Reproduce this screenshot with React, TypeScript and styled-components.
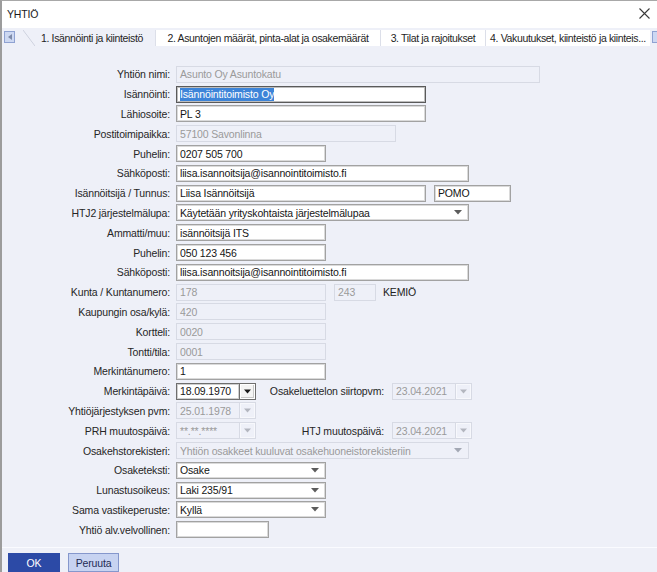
import React from 'react';
import styled, { createGlobalStyle, css } from 'styled-components';

const PanelBg = '#eef0f8';

type Variant = 'normal' | 'focus' | 'disabled';

function Caret({ disabled }: { disabled?: boolean }) {
	return (
		<svg width='8' height='5' viewBox='0 0 8 5'>
			<path d='M0 0h8L4 4.5z' fill={disabled ? '#a3a8b4' : '#5c5c5c'} />
		</svg>
	);
}

function TextField({ w, variant = 'normal', children }: { w: number; variant?: Variant; children?: React.ReactNode }) {
	return (
		<Field $w={w} $variant={variant}>
			{children}
		</Field>
	);
}

function SelectField({ w, disabled, children }: { w: number; disabled?: boolean; children?: React.ReactNode }) {
	return (
		<Field $w={w} $variant={disabled ? 'disabled' : 'normal'}>
			<SelectText>{children}</SelectText>
			<CaretBox>
				<Caret disabled={disabled} />
			</CaretBox>
		</Field>
	);
}

function DateField({ value, disabled }: { value: string; disabled?: boolean }) {
	return (
		<DateBox>
			<DateInput $disabled={disabled}>{value}</DateInput>
			<DateButton $disabled={disabled}>
				<svg width='7' height='5' viewBox='0 0 7 5'>
					<path d='M0 0.5h7L3.5 4.5z' fill={disabled ? '#b3b6bf' : '#1a1a1a'} />
				</svg>
			</DateButton>
		</DateBox>
	);
}

export default function App() {
	return (
		<>
			<GlobalStyle />
			<Window>
				<TitleBar>
					<span>YHTIÖ</span>
					<svg width='11' height='11' viewBox='0 0 11 11'>
						<path d='M0.5 0.5l10 10M10.5 0.5l-10 10' stroke='#3a3a3a' strokeWidth='1.1' />
					</svg>
				</TitleBar>

				<TabStrip>
					<ScrollButton>
						<svg width='4' height='6' viewBox='0 0 4 6'>
							<path d='M4 0v6L0 3z' fill='#7d8aa8' />
						</svg>
					</ScrollButton>
					<ActiveTab>1. Isännöinti ja kiinteistö</ActiveTab>
					<Tab $w={225}>2. Asuntojen määrät, pinta-alat ja osakemäärät</Tab>
					<Tab $w={105}>3. Tilat ja rajoitukset</Tab>
					<Tab $w={165}>4. Vakuutukset, kiinteistö ja kiinteis...</Tab>
					<ScrollButton $right />
				</TabStrip>

				<Content>
					<Row>
						<Label>Yhtiön nimi:</Label>
						<TextField w={364} variant='disabled'>
							Asunto Oy Asuntokatu
						</TextField>
					</Row>
					<Row>
						<Label>Isännöinti:</Label>
						<TextField w={250} variant='focus'>
							<Selected>Isännöintitoimisto Oy</Selected>
						</TextField>
					</Row>
					<Row>
						<Label>Lähiosoite:</Label>
						<TextField w={250}>PL 3</TextField>
					</Row>
					<Row>
						<Label>Postitoimipaikka:</Label>
						<TextField w={220} variant='disabled'>
							57100 Savonlinna
						</TextField>
					</Row>
					<Row>
						<Label>Puhelin:</Label>
						<TextField w={150}>0207 505 700</TextField>
					</Row>
					<Row>
						<Label>Sähköposti:</Label>
						<TextField w={293}>liisa.isannoitsija@isannointitoimisto.fi</TextField>
					</Row>
					<Row>
						<Label>Isännöitsijä / Tunnus:</Label>
						<TextField w={250}>Liisa Isännöitsijä</TextField>
						<Spacer $w={8} />
						<TextField w={77}>POMO</TextField>
					</Row>
					<Row>
						<Label>HTJ2 järjestelmälupa:</Label>
						<SelectField w={293}>Käytetään yrityskohtaista järjestelmälupaa</SelectField>
					</Row>
					<Row>
						<Label>Ammatti/muu:</Label>
						<TextField w={150}>isännöitsijä ITS</TextField>
					</Row>
					<Row>
						<Label>Puhelin:</Label>
						<TextField w={150}>050 123 456</TextField>
					</Row>
					<Row>
						<Label>Sähköposti:</Label>
						<TextField w={293}>liisa.isannoitsija@isannointitoimisto.fi</TextField>
					</Row>
					<Row>
						<Label>Kunta / Kuntanumero:</Label>
						<TextField w={150} variant='disabled'>
							178
						</TextField>
						<Spacer $w={8} />
						<TextField w={42} variant='disabled'>
							243
						</TextField>
						<Spacer $w={7} />
						<PlainText>KEMIÖ</PlainText>
					</Row>
					<Row>
						<Label>Kaupungin osa/kylä:</Label>
						<TextField w={150} variant='disabled'>
							420
						</TextField>
					</Row>
					<Row>
						<Label>Kortteli:</Label>
						<TextField w={150} variant='disabled'>
							0020
						</TextField>
					</Row>
					<Row>
						<Label>Tontti/tila:</Label>
						<TextField w={150} variant='disabled'>
							0001
						</TextField>
					</Row>
					<Row>
						<Label>Merkintänumero:</Label>
						<TextField w={150}>1</TextField>
					</Row>
					<Row>
						<Label>Merkintäpäivä:</Label>
						<DateField value='18.09.1970' />
						<SubLabel>Osakeluettelon siirtopvm:</SubLabel>
						<DateField value='23.04.2021' disabled />
					</Row>
					<Row>
						<Label>Yhtiöjärjestyksen pvm:</Label>
						<DateField value='25.01.1978' disabled />
					</Row>
					<Row>
						<Label>PRH muutospäivä:</Label>
						<DateField value='**.**.****' disabled />
						<SubLabel>HTJ muutospäivä:</SubLabel>
						<DateField value='23.04.2021' disabled />
					</Row>
					<Row>
						<Label>Osakehstorekisteri:</Label>
						<SelectField w={293} disabled>
							Yhtiön osakkeet kuuluvat osakehuoneistorekisteriin
						</SelectField>
					</Row>
					<Row>
						<Label>Osaketeksti:</Label>
						<SelectField w={150}>Osake</SelectField>
					</Row>
					<Row>
						<Label>Lunastusoikeus:</Label>
						<SelectField w={150}>Laki 235/91</SelectField>
					</Row>
					<Row>
						<Label>Sama vastikeperuste:</Label>
						<SelectField w={150}>Kyllä</SelectField>
					</Row>
					<Row>
						<Label>Yhtiö alv.velvollinen:</Label>
						<TextField w={93} />
					</Row>
				</Content>

				<Footer>
					<Button $primary>OK</Button>
					<Button>Peruuta</Button>
				</Footer>
			</Window>
		</>
	);
}

const GlobalStyle = createGlobalStyle`
	html, body {
		margin: 0;
		padding: 0;
		background: #ffffff;
	}
	body {
		font-family: 'Liberation Sans', Arial, sans-serif;
		font-size: 10.5px;
		letter-spacing: -0.15px;
		color: #222222;
	}
`;

const Window = styled.div`
	width: 657px;
	height: 572px;
	box-sizing: border-box;
	border-top: 1px solid #a8a8a8;
	border-left: 2px solid #9c9c9c;
	background: ${PanelBg};
	display: flex;
	flex-direction: column;
	overflow: hidden;
`;

const TitleBar = styled.div`
	height: 27px;
	flex: none;
	box-sizing: border-box;
	padding: 0 7px 2px 5px;
	background: #ffffff;
	display: flex;
	align-items: center;
	justify-content: space-between;
	color: #1a1a1a;
`;

const TabStrip = styled.div`
	height: 19px;
	flex: none;
	box-sizing: border-box;
	padding: 2px 0 1px 2px;
	display: flex;
	align-items: stretch;
	background: ${PanelBg};
	letter-spacing: -0.35px;
`;

const ScrollButton = styled.div<{ $right?: boolean }>`
	width: 11px;
	height: 12px;
	flex: none;
	box-sizing: border-box;
	margin: 1px 0 0 ${(p) => (p.$right ? '2px' : '0')};
	border: 1px solid #8fa2d2;
	background: #cdd8f2;
	display: flex;
	align-items: center;
	justify-content: center;
`;

const ActiveTab = styled.div`
	position: relative;
	width: 132px;
	margin-left: 8px;
	flex: none;
	display: flex;
	align-items: center;
	padding-left: 18px;
	box-sizing: border-box;
	color: #1e1e1e;

	&::before {
		content: '';
		position: absolute;
		left: 0;
		top: 0;
		width: 12px;
		height: 100%;
		background: linear-gradient(to top right, transparent 46%, #cdd1de 50%, transparent 54%);
	}
`;

const Tab = styled.div<{ $w: number }>`
	width: ${(p) => p.$w}px;
	flex: none;
	box-sizing: border-box;
	background: #ffffff;
	border-left: 1px solid #dcdfe9;
	display: flex;
	align-items: center;
	justify-content: center;
	white-space: nowrap;
	overflow: hidden;
	color: #1e1e1e;
`;

const Content = styled.div`
	flex: 1;
	box-sizing: border-box;
	padding-top: 17.5px;
	display: flex;
	flex-direction: column;
`;

const Row = styled.div`
	height: 19.8px;
	display: flex;
	align-items: center;
`;

const Label = styled.div`
	width: 168px;
	flex: none;
	margin-right: 6px;
	text-align: right;
	white-space: nowrap;
	color: #262626;
`;

const SubLabel = styled.div`
	width: 128px;
	flex: none;
	margin-right: 8px;
	text-align: right;
	white-space: nowrap;
	color: #262626;
`;

const PlainText = styled.span`
	color: #222222;
`;

const Spacer = styled.div<{ $w: number }>`
	width: ${(p) => p.$w}px;
	flex: none;
`;

const variantStyles = {
	normal: css`
		background: #ffffff;
		border: 1px solid #a2a2a2;
		box-shadow: inset 0 0 0 1px #dadada;
		color: #151515;
	`,
	focus: css`
		background: #ffffff;
		border: 1px solid #5a5a5a;
		box-shadow: inset 0 0 0 1px #bdbdbd;
		color: #151515;
	`,
	disabled: css`
		background: ${PanelBg};
		border: 1px solid #d7dae4;
		color: #9a9a9a;
	`,
};

const Field = styled.div<{ $w: number; $variant: Variant }>`
	width: ${(p) => p.$w}px;
	height: 17px;
	flex: none;
	box-sizing: border-box;
	padding: 0 3px 0 3px;
	display: flex;
	align-items: center;
	white-space: nowrap;
	overflow: hidden;
	${(p) => variantStyles[p.$variant]}
`;

const Selected = styled.span`
	background: #3d84d8;
	color: #ffffff;
	line-height: 13px;
`;

const SelectText = styled.span`
	flex: 1;
	overflow: hidden;
`;

const CaretBox = styled.span`
	width: 12px;
	flex: none;
	display: flex;
	justify-content: center;
	margin-right: 1px;
`;

const DateBox = styled.div`
	width: 80px;
	height: 17px;
	flex: none;
	display: flex;
`;

const DateInput = styled.div<{ $disabled?: boolean }>`
	flex: 1;
	box-sizing: border-box;
	padding-left: 3px;
	display: flex;
	align-items: center;
	${(p) =>
		p.$disabled
			? css`
					background: ${PanelBg};
					border: 1px solid #d7dae4;
					border-right: none;
					color: #9a9a9a;
			  `
			: css`
					background: #ffffff;
					border: 1px solid #6e6e6e;
					border-right: none;
					box-shadow: inset 0 0 0 1px #cfcfcf;
					color: #151515;
			  `}
`;

const DateButton = styled.div<{ $disabled?: boolean }>`
	width: 17px;
	flex: none;
	box-sizing: border-box;
	display: flex;
	align-items: center;
	justify-content: center;
	${(p) =>
		p.$disabled
			? css`
					background: ${PanelBg};
					border: 1px solid #d7dae4;
					box-shadow: inset 0 0 0 1px #f7f8fc;
			  `
			: css`
					background: #f4f4f4;
					border: 1px solid #6e6e6e;
					box-shadow: inset 0 0 0 1px #ffffff, inset -1px -1px 0 1px #c8c8c8;
			  `}
`;

const Footer = styled.div`
	height: 25px;
	flex: none;
	box-sizing: border-box;
	border-top: 1px solid #fafbff;
	padding: 5px 0 0 6px;
	display: flex;
	gap: 8px;
	align-items: flex-start;
`;

const Button = styled.div<{ $primary?: boolean }>`
	width: ${(p) => (p.$primary ? '52px' : '51px')};
	height: ${(p) => (p.$primary ? '20px' : '19px')};
	box-sizing: border-box;
	display: flex;
	align-items: center;
	justify-content: center;
	background: ${(p) => (p.$primary ? '#2c4aa6' : '#c7d3f1')};
	border: 1px solid ${(p) => (p.$primary ? '#2c4aa6' : '#8597cc')};
	color: ${(p) => (p.$primary ? '#ffffff' : '#1f2b55')};
`;
